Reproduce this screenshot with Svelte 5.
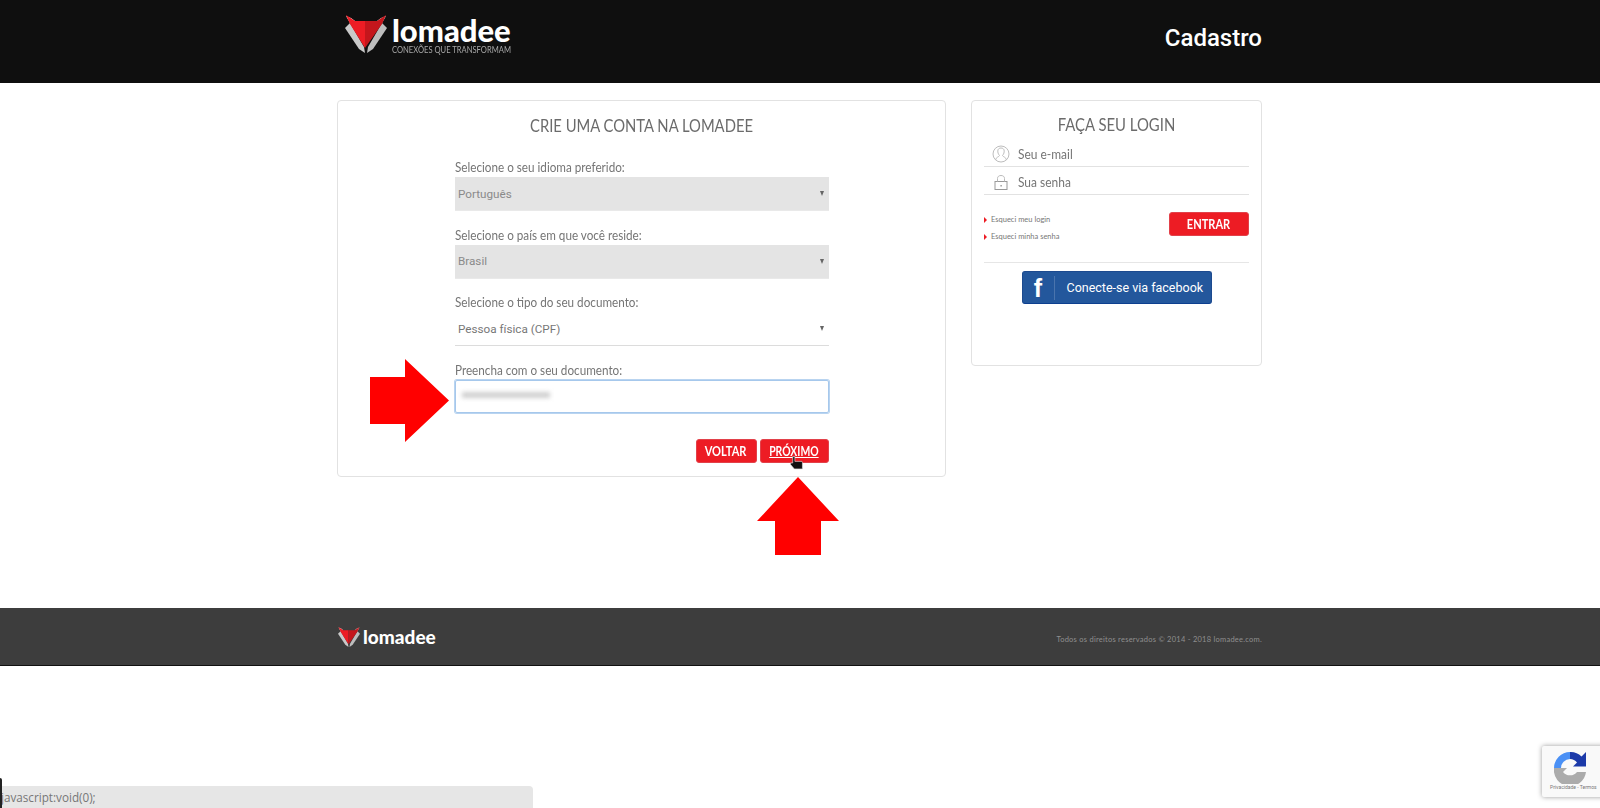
<script>
  const selects = [
    { label: 'Selecione o seu idioma preferido:', value: 'Português', filled: true },
    { label: 'Selecione o país em que você reside:', value: 'Brasil', filled: true },
    { label: 'Selecione o tipo do seu documento:', value: 'Pessoa física (CPF)', filled: false }
  ];
</script>

{#snippet fox()}
  <svg class="fox" viewBox="0 0 42 38" aria-hidden="true">
    <polygon points="0,13 5,8 19,32 20,38 14,34" fill="#c9c9c9" />
    <polygon points="42,13 37,8 23,32 22,38 28,34" fill="#bdbdbd" />
    <polygon points="1,1 5,8 10,6 6,3" fill="#fff" />
    <polygon points="41,1 37,8 32,6 36,3" fill="#e8e8e8" />
    <polygon points="1,0 10,6 20,6 20,33 5,9" fill="#ed1c24" />
    <polygon points="41,0 32,6 20,6 20,33 37,9" fill="#c4161c" />
  </svg>
{/snippet}

<div class="page">
  <header class="top">
    <div class="wrap top-inner">
      <div class="logo">
        {@render fox()}
        <div class="logo-text">
          <span class="brand">lomadee</span>
          <span class="tag">CONEXÕES QUE TRANSFORMAM</span>
        </div>
      </div>
      <h1>Cadastro</h1>
    </div>
  </header>

  <main class="wrap columns">
    <section class="card signup">
      <h2>CRIE UMA CONTA NA LOMADEE</h2>
      <form class="fields">
        {#each selects as s}
          <div class="field">
            <span class="label">{s.label}</span>
            <div class="select" class:filled={s.filled}>
              <span>{s.value}</span>
              <i class="caret"></i>
            </div>
          </div>
        {/each}
        <div class="field">
          <span class="label">Preencha com o seu documento:</span>
          <div class="input"><span class="blurred"></span></div>
        </div>
        <div class="actions">
          <button type="button" class="btn"><span>VOLTAR</span></button>
          <button type="button" class="btn next"><span>PRÓXIMO</span></button>
        </div>
      </form>
    </section>

    <aside class="card login">
      <h3>FAÇA SEU LOGIN</h3>
      <div class="login-row first">
        <svg class="ico" viewBox="0 0 18 18" aria-hidden="true">
          <circle cx="9" cy="9" r="8" fill="none" stroke="#bdbdbd" />
          <path d="M3.500 15c.5-3 3.500-3 4-4.500C6 9 5.800 7 5.800 6c0-2 1.400-3 3.200-3s3.200 1 3.200 3c0 1-.2 3-1.700 4.500.5 1.500 3.500 1.500 4 4.500" fill="none" stroke="#bdbdbd" />
        </svg>
        <span>Seu e-mail</span>
      </div>
      <div class="login-row">
        <svg class="ico" viewBox="0 0 18 18" aria-hidden="true">
          <rect x="3" y="8.500" width="12" height="8" fill="none" stroke="#999" />
          <path d="M5.500 8.500V5.500C5.500 3.500 7 2.500 9 2.500s3.500 1 3.500 3v3" fill="none" stroke="#bbb" />
          <rect x="8.500" y="12" width="1.200" height="1.500" fill="#888" />
        </svg>
        <span>Sua senha</span>
      </div>
      <div class="login-actions">
        <ul>
          <li>Esqueci meu login</li>
          <li>Esqueci minha senha</li>
        </ul>
        <button type="button" class="btn enter"><span>ENTRAR</span></button>
      </div>
      <hr />
      <button type="button" class="fb">
        <span class="fb-f">f</span>
        <span class="fb-label">Conecte-se via facebook</span>
      </button>
    </aside>
  </main>

  <footer class="bottom">
    <div class="wrap bottom-inner">
      <div class="logo small">
        {@render fox()}
        <span class="brand">lomadee</span>
      </div>
      <small>Todos os direitos reservados © 2014 - 2018 lomadee.com.</small>
    </div>
  </footer>

  <svg class="arrow a-right" viewBox="0 0 79 83" aria-hidden="true">
    <polygon points="0,18 35,18 35,0 79,41.500 35,83 35,65 0,65" fill="#f00" />
  </svg>
  <svg class="arrow a-up" viewBox="0 0 82 78" aria-hidden="true">
    <polygon points="41,0 82,44 64,44 64,78 18,78 18,44 0,44" fill="#f00" />
  </svg>
  <svg class="cursor" viewBox="0 0 12 13" aria-hidden="true">
    <path d="M2.500 .5h2v4.500h6.500l.5 1v6H4L.5 8V6.500H2.500z" fill="#111" stroke="#ddd" stroke-width=".6" />
  </svg>

  <div class="recaptcha">
    <svg viewBox="0 0 32 32" aria-hidden="true">
      <path d="M16 0A16 16 0 0 0 0 16h7a9 9 0 0 1 9-9z" fill="#4a90f5" />
      <path d="M16 0v7a9 9 0 0 1 7 3.500l-4 4H32V0l-4.500 4.500A16 16 0 0 0 16 0z" fill="#1c3aa9" />
      <path d="M0 16h13l-4 4a9 9 0 0 0 14 0h9A16 16 0 0 1 0 16z" fill="#ababab" />
    </svg>
    <span>Privacidade - Termos</span>
  </div>

  <div class="status">javascript:void(0);</div>
  <div class="status-edge"></div>
</div>

<style>
  :global(body) {
    margin: 0;
    background: #fff;
  }
  .page {
    position: relative;
    height: 808px;
    overflow: hidden;
    font-family: Lato, "Liberation Sans", sans-serif;
  }
  .wrap {
    width: 926px;
    margin: 0 auto;
    box-sizing: border-box;
  }
  .top {
    height: 83px;
    background: #0f0f0f;
  }
  .top-inner {
    display: flex;
    justify-content: space-between;
    align-items: flex-start;
    padding: 15px 1px 0 8px;
  }
  h1 {
    margin: 9px 0 0;
    font: 500 24px Roboto, sans-serif;
    color: #fff;
  }
  .logo {
    display: flex;
    align-items: flex-start;
    gap: 5px;
  }
  .fox {
    width: 42px;
    height: 38px;
    display: block;
  }
  .logo-text {
    display: flex;
    flex-direction: column;
  }
  .brand {
    font: 900 31px/29px Lato, sans-serif;
    color: #fff;
    margin-top: 1px;
  }
  .tag {
    font: 400 9.500px/10px Lato, sans-serif;
    color: #a8a8a8;
    white-space: nowrap;
    transform: scaleX(.8);
    transform-origin: left center;
  }
  .columns {
    display: flex;
    align-items: flex-start;
    gap: 25px;
    height: 525px;
    padding-top: 17px;
  }
  .card {
    border: 1px solid #e2e2e2;
    border-radius: 4px;
    box-sizing: border-box;
    color: #6f6f6f;
  }
  .signup {
    width: 609px;
    height: 377px;
    flex: none;
  }
  h2 {
    margin: 15px 0 0;
    text-align: center;
    font-size: 17px;
    line-height: 20px;
    font-weight: 400;
    color: #6b6b6b;
    transform: scaleX(.87);
  }
  .fields {
    width: 373.500px;
    margin: 24px 0 0 117px;
  }
  .field {
    height: 67.500px;
  }
  .label {
    display: block;
    font-size: 13px;
    line-height: 15px;
    height: 15px;
    color: #757575;
    white-space: nowrap;
    transform: scaleX(.9);
    transform-origin: left center;
  }
  .select {
    height: 34px;
    margin-top: 2px;
    padding: 0 5px 0 3px;
    display: flex;
    align-items: center;
    justify-content: space-between;
    border-bottom: 1px solid #dcdcdc;
    box-sizing: border-box;
    font: 400 11.700px Roboto, sans-serif;
    color: #777;
  }
  .filled {
    background: #e4e4e4;
    border-bottom-color: #e9e9e9;
    color: #8a8a8a;
  }
  .caret {
    width: 0;
    height: 0;
    border-left: 2.500px solid transparent;
    border-right: 2.500px solid transparent;
    border-top: 5px solid #666;
  }
  .input {
    height: 33px;
    margin-top: 2px;
    border: 1px solid #a6c8ec;
    border-radius: 2px;
    box-shadow: 0 0 0 1px #b9d4f0;
    box-sizing: border-box;
    display: flex;
    align-items: center;
    padding-left: 6px;
  }
  .blurred {
    width: 88px;
    height: 6px;
    margin-top: -3px;
    background: #d0d0d0;
    filter: blur(2px);
  }
  .actions {
    display: flex;
    justify-content: flex-end;
    gap: 3px;
    margin-top: 9px;
  }
  .btn {
    height: 24px;
    border: 1px solid #e2414a;
    border-radius: 3px;
    background: #ed1c24;
    color: #fff;
    font: 700 13px Lato, sans-serif;
    padding: 0;
  }
  .btn span {
    display: inline-block;
    transform: scaleX(.85);
  }
  .actions .btn {
    width: 61px;
  }
  .actions .next {
    width: 69px;
  }
  .next span {
    text-decoration: underline;
    transform: scaleX(.8);
  }
  .login {
    width: 291px;
    height: 266px;
    flex: none;
    padding: 0 12px;
  }
  h3 {
    margin: 14px 0 0;
    text-align: center;
    font-size: 17px;
    line-height: 20px;
    font-weight: 400;
    color: #6b6b6b;
    transform: scaleX(.875);
  }
  .login-row {
    display: flex;
    align-items: center;
    gap: 8px;
    height: 28px;
    padding: 2px 0 0 8px;
    border-bottom: 1px solid #e2e2e2;
    box-sizing: border-box;
    font-size: 13px;
    color: #757575;
  }
  .login-row span {
    transform: scaleX(.92);
    transform-origin: left center;
  }
  .first {
    height: 30px;
    padding-top: 4px;
    margin-top: 2px;
  }
  .ico {
    width: 18px;
    height: 18px;
    flex: none;
  }
  .login-actions {
    display: flex;
    justify-content: space-between;
    align-items: flex-start;
    margin-top: 17px;
  }
  ul {
    margin: 0;
    padding: 0;
    list-style: none;
    font: 7.500px/16.500px Lato, sans-serif;
    color: #777;
  }
  li {
    position: relative;
    padding-left: 7px;
  }
  li::before {
    content: "";
    position: absolute;
    left: 0;
    top: 5px;
    border-left: 3px solid #ed1c24;
    border-top: 3px solid transparent;
    border-bottom: 3px solid transparent;
  }
  .enter {
    width: 80px;
  }
  hr {
    border: 0;
    border-top: 1px solid #e6e6e6;
    margin: 17px 0 0;
  }
  .fb {
    display: flex;
    align-items: center;
    width: 190px;
    height: 33px;
    margin: 8px auto 0;
    padding: 0;
    background: #23579c;
    border: 1px solid #1c4a8f;
    border-bottom-color: #0d3f8f;
    border-radius: 3px;
    color: #fff;
  }
  .fb-f {
    width: 31px;
    height: 24px;
    font: 700 25px/24px "Liberation Sans", sans-serif;
    text-align: center;
    border-right: 1px solid #4a74ad;
    flex: none;
  }
  .fb-label {
    font: 400 12.500px Roboto, sans-serif;
    margin-left: 12px;
    white-space: nowrap;
  }
  .bottom {
    height: 58px;
    box-sizing: border-box;
    background: #3d3d3d;
    border-bottom: 1px solid #111;
  }
  .bottom-inner {
    display: flex;
    justify-content: space-between;
    align-items: center;
    height: 100%;
    padding: 0 1px;
  }
  .small {
    align-items: center;
    gap: 3px;
  }
  .small .fox {
    width: 22px;
    height: 20px;
  }
  .small .brand {
    font-size: 19px;
    line-height: 20px;
    margin: 0;
  }
  small {
    font: 7.500px Lato, sans-serif;
    color: #8f8f8f;
    letter-spacing: .25px;
    margin-top: 5px;
  }
  .arrow,
  .cursor,
  .recaptcha,
  .status,
  .status-edge {
    position: absolute;
  }
  .a-right {
    left: 370px;
    top: 359px;
    width: 79px;
    height: 83px;
  }
  .a-up {
    left: 757px;
    top: 477px;
    width: 82px;
    height: 78px;
  }
  .cursor {
    left: 790px;
    top: 456px;
    width: 13px;
    height: 14px;
  }
  .recaptcha {
    left: 1542px;
    top: 746px;
    width: 70px;
    height: 51px;
    background: #f9f9f9;
    border-radius: 2px;
    box-shadow: 0 0 5px #999;
  }
  .recaptcha svg {
    position: absolute;
    left: 12px;
    top: 6px;
    width: 32px;
    height: 32px;
  }
  .recaptcha span {
    position: absolute;
    left: 8px;
    top: 38px;
    font: 5px Roboto, sans-serif;
    color: #777;
    white-space: nowrap;
  }
  .status {
    left: 0;
    top: 786px;
    width: 533px;
    height: 22px;
    padding-left: 1px;
    box-sizing: border-box;
    background: #e6e6e6;
    border-radius: 0 4px 0 0;
    font: 11.700px/23px "Open Sans", sans-serif;
    color: #777;
  }
  .status-edge {
    left: 0;
    top: 778px;
    width: 2px;
    height: 30px;
    background: #222;
    border-radius: 0 2px 0 0;
  }
</style>
